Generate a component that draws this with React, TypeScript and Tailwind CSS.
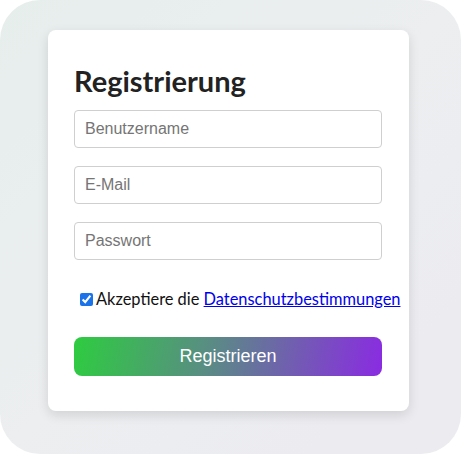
import React from "react";

const FIELDS = [
  { type: "text", placeholder: "Benutzername" },
  { type: "email", placeholder: "E-Mail" },
  { type: "password", placeholder: "Passwort" },
];

export default function App() {
  return (
    <div className="w-[461px] h-[454px] bg-white">
      <div className="w-full h-full rounded-[40px] bg-[linear-gradient(135deg,#e6eeec_0%,#eceef0_50%,#ecebf0_100%)] pt-[30px] pl-[48px]">
        <div className="w-[361px] h-[381px] bg-white rounded-[8px] shadow-[0_4px_12px_rgba(0,0,0,0.12)] px-[26px] pt-[34px]">
          <h2 className="m-0 text-[29px] leading-[34px] font-bold text-[#222] font-['Lato','Noto_Sans',sans-serif]">
            Registrierung
          </h2>
          <form className="flex flex-col mt-[12px]" onSubmit={(e) => e.preventDefault()}>
            {FIELDS.map((f) => (
              <input
                key={f.placeholder}
                type={f.type}
                placeholder={f.placeholder}
                className="w-[308px] h-[38px] mb-[18px] px-[10px] border border-[#cfcfcf] rounded-[4px] text-[16px] font-['Liberation_Sans',Arial,sans-serif] text-[#333] placeholder:text-[#757575] outline-none"
              />
            ))}
            <label className="flex items-center mt-[9px] whitespace-nowrap text-[16.4px] text-[#111] font-['Lato','Noto_Sans',sans-serif]">
              <input type="checkbox" defaultChecked className="ml-[6px] mr-[3px] w-[13px] h-[13px] accent-[#1a73e8]" />
              Akzeptiere die&nbsp;
              <a href="#" className="text-[#0000ee] underline">Datenschutzbestimmungen</a>
            </label>
            <button
              type="submit"
              className="mt-[25px] w-[308px] h-[39px] rounded-[8px] text-white text-[18px] font-['Liberation_Sans',Arial,sans-serif] bg-[linear-gradient(100deg,#2ecc40_0%,#5b8a86_45%,#8a2be2_100%)]"
            >
              Registrieren
            </button>
          </form>
        </div>
      </div>
    </div>
  );
}
